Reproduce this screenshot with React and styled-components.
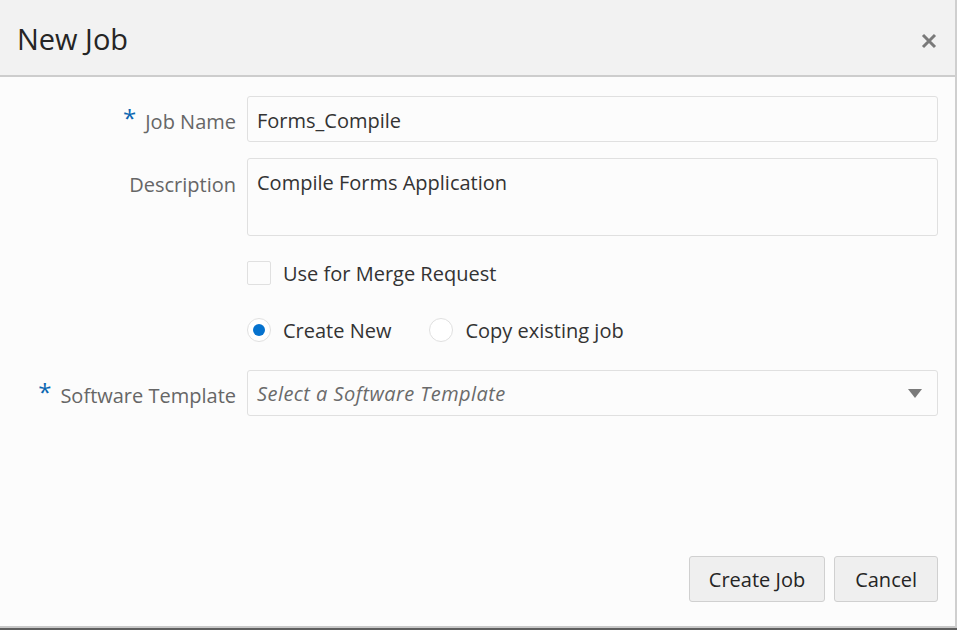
import React from "react";
import styled, { createGlobalStyle } from "styled-components";

const Global = createGlobalStyle`
  html, body { margin: 0; padding: 0; background: #fcfcfc; }
  body { font-family: "Open Sans", "Noto Sans", sans-serif; }
  * { box-sizing: border-box; }
`;

const Page = styled.div`
  width: 957px;
  height: 630px;
  display: flex;
  flex-direction: column;
  border-bottom: 2px solid #5f5f5f;
`;

const Dialog = styled.div`
  flex: 1;
  display: flex;
  flex-direction: column;
  background: #fcfcfc;
  border-right: 2px solid #cfcfcf;
  border-bottom: 2px solid #c8c8c8;
`;

const Header = styled.div`
  height: 77px;
  display: flex;
  align-items: center;
  justify-content: space-between;
  padding: 0 18px 0 17px;
  background: #f2f2f2;
  border-bottom: 2px solid #cdcdcd;
`;

const Title = styled.h1`
  margin: 0;
  font-size: 29px;
  font-weight: 400;
  color: #252525;
  padding-top: 2px;
`;

const CloseButton = styled.button`
  border: 0;
  background: none;
  padding: 0;
  width: 16px;
  height: 16px;
  margin-top: 6px;
  display: flex;
  cursor: pointer;
`;

const Body = styled.div`
  flex: 1;
  display: flex;
  flex-direction: column;
  padding: 19px 17px 0 0;
`;

const Row = styled.div`
  display: grid;
  grid-template-columns: 236px 1fr;
  column-gap: 11px;
  align-items: ${(p) => (p.$top ? "start" : "center")};
  margin-top: ${(p) => p.$mt || 0}px;
  min-height: ${(p) => p.$h || 46}px;
`;

const Label = styled.label`
  justify-self: end;
  font-size: 20px;
  color: #666;
  padding-top: ${(p) => (p.$top ? "13px" : "4px")};
  display: flex;
  align-items: baseline;
  white-space: nowrap;
`;

const Required = styled.span`
  color: #0b67b2;
  font-size: 24px;
  line-height: 1;
  margin-right: 9px;
  position: relative;
  top: -2px;
`;

const TextInput = styled.div`
  height: ${(p) => p.$h || 46}px;
  border: 1px solid #e0e0e0;
  border-radius: 3px;
  background: #fcfcfc;
  font-size: 20px;
  color: #333;
  padding: ${(p) => (p.$multi ? "10px 9px" : `${p.$pt || 0}px 9px 0`)};
  display: flex;
  align-items: ${(p) => (p.$multi ? "flex-start" : "center")};
`;

const Select = styled(TextInput)`
  justify-content: space-between;
  padding-right: 15px;
`;

const Placeholder = styled.span`
  font-style: italic;
  color: #6a6a6a;
  letter-spacing: 0.45px;
`;

const Options = styled.div`
  display: flex;
  align-items: center;
  gap: 38px;
`;

const Choice = styled.label`
  display: flex;
  align-items: center;
  gap: 12px;
  font-size: 20px;
  color: #333;
`;

const Box = styled.span`
  width: 24px;
  height: 24px;
  border: 1px solid #e0e0e0;
  border-radius: 2px;
  background: #fcfcfc;
`;

const Radio = styled.span`
  width: 24px;
  height: 24px;
  border: 1px solid #e0e0e0;
  border-radius: 50%;
  background: #fff;
  display: flex;
  align-items: center;
  justify-content: center;
  &::after {
    content: "";
    width: 12px;
    height: 12px;
    border-radius: 50%;
    background: ${(p) => (p.$checked ? "#0572ce" : "transparent")};
  }
`;

const Footer = styled.div`
  display: flex;
  justify-content: flex-end;
  gap: 9px;
  padding: 0 17px 24px 0;
`;

const Button = styled.button`
  height: 46px;
  padding: 0 ${(p) => p.$px || 20}px;
  border: 1px solid #d0d0d0;
  border-radius: 3px;
  background: #efefef;
  font-family: inherit;
  font-size: 20px;
  color: #252525;
  cursor: pointer;
`;

export default function App() {
  return (
    <>
      <Global />
      <Page>
        <Dialog>
          <Header>
            <Title>New Job</Title>
            <CloseButton aria-label="Close">
              <svg width="16" height="16" viewBox="0 0 16 16">
                <path d="M2 2 L14 14 M14 2 L2 14" stroke="#7a7a7a" strokeWidth="3" />
              </svg>
            </CloseButton>
          </Header>
          <Body>
            <Row>
              <Label>
                <Required>*</Required>Job Name
              </Label>
              <TextInput $pt={3}>Forms_Compile</TextInput>
            </Row>
            <Row $mt={16} $h={78} $top>
              <Label $top>Description</Label>
              <TextInput $h={78} $multi>
                Compile Forms Application
              </TextInput>
            </Row>
            <Row $mt={14}>
              <span />
              <Choice>
                <Box />
                Use for Merge Request
              </Choice>
            </Row>
            <Row $mt={11}>
              <span />
              <Options>
                <Choice>
                  <Radio $checked />
                  Create New
                </Choice>
                <Choice>
                  <Radio />
                  Copy existing job
                </Choice>
              </Options>
            </Row>
            <Row $mt={17}>
              <Label>
                <Required>*</Required>Software Template
              </Label>
              <Select>
                <Placeholder>Select a Software Template</Placeholder>
                <svg width="14" height="9" viewBox="0 0 14 9">
                  <path d="M0 0 H14 L7 9 Z" fill="#7a7a7a" />
                </svg>
              </Select>
            </Row>
          </Body>
          <Footer>
            <Button $px={19}>Create Job</Button>
            <Button $px={20}>Cancel</Button>
          </Footer>
        </Dialog>
      </Page>
    </>
  );
}
